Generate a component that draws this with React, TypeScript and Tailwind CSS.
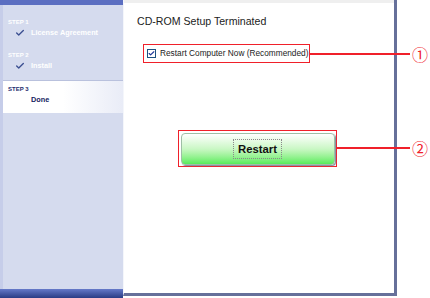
import { Check } from "lucide-react"

const font = { fontFamily: '"Liberation Sans", Arial, sans-serif' }

function StepItem({ step, title, done, active }: { step: string; title: string; done?: boolean; active?: boolean }) {
	return (
		<div className={active ? "h-[33px] border-t border-[#b9c1dd] bg-gradient-to-r from-white via-white to-[#e9ecf7] pl-[5px] pt-[4px]" : "h-[33px] pl-[5px] pt-[4px]"}>
			<div className={`text-[6px] font-bold leading-[8px] ${active ? "text-[#1d2c6e]" : "text-white"}`}>{step}</div>
			<div className="flex items-center h-[12px] mt-[1px]">
				<div className="w-[23px] flex justify-center">
					{done && <Check className="w-[10px] h-[10px] text-[#3b4f91]" strokeWidth={3.2} />}
				</div>
				<span className={`text-[7.3px] font-bold ${active ? "text-[#15235e]" : "text-white"}`}>{title}</span>
			</div>
		</div>
	)
}

function Sidebar() {
	return (
		<div className="w-[123px] h-[298px] flex flex-col bg-[#d5dbee] border-l-[3px] border-[#c6cde9]">
			<div className="h-[5px] bg-[#5b6ec1] -ml-[3px]"></div>
			<div className="h-[9px]"></div>
			<StepItem step="STEP 1" title="License Agreement" done />
			<StepItem step="STEP 2" title="Install" done />
			<StepItem step="STEP 3" title="Done" active />
			<div className="flex-1"></div>
			<div className="h-[9px] -ml-[3px] bg-gradient-to-b from-[#6579c9] to-[#2a3c84]"></div>
		</div>
	)
}

function Main() {
	return (
		<div className="w-[274px] h-[296px] flex flex-col bg-white border-r-[3px] border-b-[3px] border-[#66709a] border-l border-l-[#f4f6fb]">
			<div className="h-[3px] bg-[#efefef]"></div>
			<div className="pl-[13px] pt-[12px] text-[10.6px] text-[#222] leading-[12px]">CD-ROM Setup Terminated</div>
			<div className="ml-[19px] mt-[17px] w-[167px] h-[19px] border-[1.5px] border-[#f0202a] flex items-center pl-[3px] gap-[4px]">
				<div className="w-[9px] h-[9px] border border-[#1c5180] bg-white flex items-center justify-center">
					<Check className="w-[7px] h-[7px] text-[#21399a]" strokeWidth={4} />
				</div>
				<span className="text-[8.3px] text-[#222]">Restart Computer Now (Recommended)</span>
			</div>
			<div className="ml-[54px] mt-[67px] w-[159px] h-[37px] border-[1.5px] border-[#f0202a] p-[1.5px]">
				<div className="h-full rounded-[4px] border border-[#9fbfa6] bg-gradient-to-b from-white via-[#c9f7c4] to-[#54ec5a] shadow-[1px_1px_1px_#7a8a9a] flex items-center justify-center">
					<span className="border border-dotted border-[#8a8a8a] px-[4px] py-[3px] text-[11.3px] font-bold text-[#111] leading-[12px]">Restart</span>
				</div>
			</div>
		</div>
	)
}

export default function App() {
	return (
		<div className="w-[430px] h-[298px] bg-white flex relative overflow-hidden" style={font}>
			<Sidebar />
			<Main />
			<div className="absolute left-[310px] top-[53px] w-[100px] h-[1.5px] bg-[#f0202a]"></div>
			<div className="absolute left-[336px] top-[147px] w-[74px] h-[1.5px] bg-[#f0202a]"></div>
			<div className="absolute left-[410px] top-[45px] w-[20px] text-center text-[16px] leading-[18px] text-[#f0202a]" style={{ fontFamily: '"Noto Sans CJK JP", sans-serif' }}>①</div>
			<div className="absolute left-[410px] top-[139px] w-[20px] text-center text-[16px] leading-[18px] text-[#f0202a]" style={{ fontFamily: '"Noto Sans CJK JP", sans-serif' }}>②</div>
		</div>
	)
}
